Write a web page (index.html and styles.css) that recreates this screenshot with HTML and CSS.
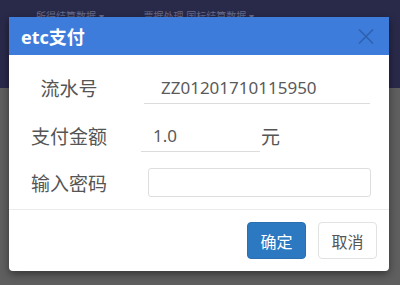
FILE: index.html
```html
<!DOCTYPE html>
<html lang="zh">
<head>
<meta charset="utf-8">
<title>etc支付</title>
<link rel="stylesheet" href="styles.css">
</head>
<body>
<div class="page">
  <div class="topbar">
    <span class="nav-item">所得结算数据 ▾</span>
    <span class="nav-item">票据处理 国标结算数据 ▾</span>
  </div>
  <div class="content"></div>
</div>
<div class="modal">
  <div class="modal-header">
    <span class="modal-title">etc支付</span>
    <svg class="close" width="16" height="15" viewBox="0 0 16 15"><path d="M1 0.5 L15 14.5 M15 0.5 L1 14.5" stroke="#2d62b0" stroke-width="1.6" fill="none"/></svg>
  </div>
  <div class="modal-body">
    <div class="form">
      <label class="label">流水号</label>
      <div class="field serial">ZZ01201710115950</div>
      <label class="label">支付金额</label>
      <div class="amount-wrap"><div class="field amount">1.0</div><span class="unit">元</span></div>
      <label class="label">输入密码</label>
      <input type="password" class="pwd">
    </div>
  </div>
  <div class="modal-footer">
    <button class="btn btn-primary">确定</button>
    <button class="btn btn-default">取消</button>
  </div>
</div>
</body>
</html>
```

FILE: styles.css
```css
html, body {
  margin: 0;
  padding: 0;
}
body {
  width: 400px;
  height: 285px;
  overflow: hidden;
  font-family: "Noto Sans", "Noto Sans CJK SC", sans-serif;
}
.page {
  height: 285px;
  display: flex;
  flex-direction: column;
}
.topbar {
  height: 88px;
  background: #29294a;
  display: flex;
  gap: 40px;
  padding: 8px 0 0 36px;
  box-sizing: border-box;
  font-size: 10px;
  color: #686b88;
}
.content {
  flex: 1;
  background: #5f5f5f;
}
.modal {
  position: absolute;
  left: 9px;
  top: 17px;
  width: 380px;
  height: 254px;
  background: #fff;
  border-radius: 0 0 4px 4px;
  box-shadow: 0 3px 8px rgba(0, 0, 0, 0.45);
  overflow: hidden;
  display: flex;
  flex-direction: column;
}
.modal-header {
  height: 38px;
  flex: none;
  background: #3d7cdb;
  display: flex;
  align-items: center;
  justify-content: space-between;
  padding: 0 15px 0 12px;
}
.modal-title {
  color: #fff;
  font-size: 18px;
  font-weight: bold;
}
.close {
  display: block;
}
.modal-body {
  padding: 17px 0 12px;
  border-bottom: 1px solid #ebebeb;
}
.form {
  display: grid;
  grid-template-columns: 120px 1fr;
  column-gap: 15px;
  row-gap: 16px;
  align-items: center;
}
.label {
  text-align: center;
  font-size: 19px;
  color: #555;
}
.field {
  height: 32px;
  box-sizing: border-box;
  border-bottom: 1px solid #dcdcdc;
  font-size: 17px;
  color: #5a5a5a;
  display: flex;
  align-items: center;
}
.serial {
  width: 226px;
  padding-left: 17px;
}
.amount-wrap {
  display: flex;
  align-items: center;
}
.amount {
  margin-left: -3px;
  width: 119px;
  padding-left: 12px;
}
.unit {
  margin-left: 1px;
  font-size: 19px;
  color: #555;
}
.pwd {
  margin: 0 0 0 4px;
  width: 223px;
  height: 29px;
  box-sizing: border-box;
  border: 1px solid #dedede;
  border-radius: 3px;
  background: #fff;
}
.modal-footer {
  flex: 1;
  display: flex;
  justify-content: flex-end;
  align-items: flex-start;
  gap: 12px;
  padding: 12px 12px 0;
}
.btn {
  width: 59px;
  height: 37px;
  border-radius: 4px;
  font-size: 16px;
  font-family: "Noto Sans", "Noto Sans CJK SC", sans-serif;
  padding: 0;
}
.btn-primary {
  background: #2c79c1;
  color: #fff;
  border: 1px solid #2a6fb2;
}
.btn-default {
  background: #fff;
  color: #555;
  border: 1px solid #e2e2e2;
}
```
